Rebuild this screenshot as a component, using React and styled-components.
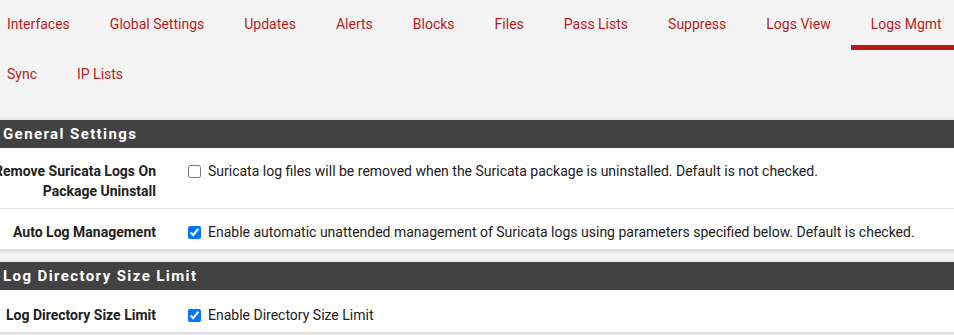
import React from 'react'
import styled, { createGlobalStyle } from 'styled-components'

const GlobalStyle = createGlobalStyle`
  html, body {
    margin: 0;
    padding: 0;
    background: #f4f4f4;
    overflow: hidden;
  }
  body {
    font-family: Roboto, "Liberation Sans", sans-serif;
    color: #212121;
  }
`

const tabs = [
  'Interfaces', 'Global Settings', 'Updates', 'Alerts', 'Blocks', 'Files',
  'Pass Lists', 'Suppress', 'Logs View', 'Logs Mgmt', 'Sync', 'IP Lists',
]

const App = () => {
  return <Page>
    <GlobalStyle />
    <TabBar>
      {tabs.map(t => (
        <Tab key={t} active={t === 'Logs Mgmt'}>{t}</Tab>
      ))}
    </TabBar>

    <Panel>
      <PanelHeading>General Settings</PanelHeading>
      <Row>
        <Label>Remove Suricata Logs On<br />Package Uninstall</Label>
        <Control>
          <Checkbox type="checkbox" />
          Suricata log files will be removed when the Suricata package is uninstalled. Default is not checked.
        </Control>
      </Row>
      <Row>
        <Label>Auto Log Management</Label>
        <Control>
          <Checkbox type="checkbox" defaultChecked />
          Enable automatic unattended management of Suricata logs using parameters specified below. Default is checked.
        </Control>
      </Row>
    </Panel>

    <Panel>
      <PanelHeading>Log Directory Size Limit</PanelHeading>
      <Row last>
        <Label>Log Directory Size Limit</Label>
        <Control>
          <Checkbox type="checkbox" defaultChecked />
          Enable Directory Size Limit
        </Control>
      </Row>
    </Panel>
  </Page>
}

const Page = styled.div`
  margin: 0 -30px 0 -13px;
`

const TabBar = styled.ul`
  display: flex;
  flex-wrap: wrap;
  list-style: none;
  margin: 0;
  padding: 0;
`

const Tab = styled.li`
  padding: 14px 20px 11px;
  line-height: 20px;
  font-size: 14px;
  color: #b71c1c;
  white-space: nowrap;
  border-bottom: 5px solid ${props => props.active ? '#b71c1c' : 'transparent'};
`

const Panel = styled.section`
  background: #ffffff;
  margin: 20px 0 13px;
  box-shadow: 0 1px 6px rgba(0, 0, 0, 0.16);

  & + & {
    margin-top: 0;
  }
`

const PanelHeading = styled.h2`
  margin: 0;
  background: #424242;
  color: #ffffff;
  height: 28px;
  line-height: 28px;
  padding-left: 16px;
  font-size: 15px;
  font-weight: 700;
  letter-spacing: 1.4px;
`

const Row = styled.div`
  display: grid;
  grid-template-columns: 184px 1fr;
  padding: ${props => props.last ? '15px 0 7px' : '13px 0 7px'};
  font-size: 14px;
  line-height: 20px;

  & + & {
    border-top: 1px solid #e0e0e0;
  }
`

const Label = styled.div`
  text-align: right;
  font-weight: 700;
  padding-right: 15px;
`

const Control = styled.label`
  display: flex;
  align-items: flex-start;
  padding-left: 17px;
  white-space: nowrap;
`

const Checkbox = styled.input`
  margin: 4px 7px 0 0;
  width: 13px;
  height: 13px;
  flex: none;
`

export default App
